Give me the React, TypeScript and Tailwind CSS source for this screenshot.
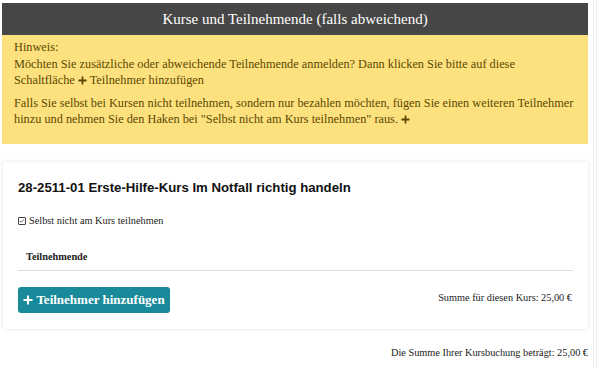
import React from "react";

const serif = { fontFamily: '"Liberation Serif", "DejaVu Serif", serif' };

function Plus({ className = "" }: { className?: string }) {
  return (
    <svg viewBox="0 0 10 10" className={className} aria-hidden>
      <path d="M5 0.5v9M0.5 5h9" stroke="currentColor" strokeWidth="2" fill="none" />
    </svg>
  );
}

export default function App() {
  return (
    <div className="w-[600px] h-[368px] bg-white overflow-hidden relative" style={serif}>
      <div className="absolute top-0 bottom-0 left-[593px] w-[4px] border-l border-r border-[#eeeeee]" />
      <div className="pt-[3px] pl-[2px] w-[588px]">
        <div className="bg-[#464646] h-[32px] flex items-center justify-center text-white text-[15px]">
          Kurse und Teilnehmende (falls abweichend)
        </div>
        <div className="bg-[#fee17f] h-[109px] px-[12px] pt-[4px] text-[#5a4800] text-[12.3px] leading-[16.5px] whitespace-nowrap">
          <div>Hinweis:</div>
          <div>
            Möchten Sie zusätzliche oder abweichende Teilnehmende anmelden? Dann klicken Sie bitte auf diese
            <br />
            Schaltfläche <Plus className="inline w-[9px] h-[9px] mb-[2px]" /> Teilnehmer hinzufügen
          </div>
          <div className="mt-[6px]">
            Falls Sie selbst bei Kursen nicht teilnehmen, sondern nur bezahlen möchten, fügen Sie einen weiteren Teilnehmer
            <br />
            hinzu und nehmen Sie den Haken bei "Selbst nicht am Kurs teilnehmen" raus.{" "}
            <Plus className="inline w-[9px] h-[9px] mb-[2px]" />
          </div>
        </div>
        <div className="mt-[18px] ml-[1px] bg-white h-[167px] shadow-[0_0_4px_rgba(0,0,0,0.12)] px-[15px] pt-[16px]">
          <div
            className="text-[13.2px] font-bold text-[#111]"
            style={{ fontFamily: '"Liberation Sans", Arial, sans-serif' }}
          >
            28-2511-01 Erste-Hilfe-Kurs Im Notfall richtig handeln
          </div>
          <div className="mt-[15px] flex items-center text-[10.3px] text-[#222]">
            <span className="inline-block w-[8px] h-[8px] border border-[#444] rounded-[1px] mr-[3px] relative">
              <svg viewBox="0 0 8 8" className="absolute inset-0 w-full h-full">
                <path d="M1.3 3.8l1.7 1.8L6.6 1.9" stroke="#333" strokeWidth="1.1" fill="none" />
              </svg>
            </span>
            Selbst nicht am Kurs teilnehmen
          </div>
          <div className="mt-[21px] border-b border-[#dcdcdc] pb-[5px] pl-[8px] text-[10.3px] font-bold text-[#222]">
            Teilnehmende
          </div>
          <div className="mt-[16px] flex items-center justify-between">
            <button className="bg-[#198a99] text-white rounded-[3px] h-[26px] w-[152px] flex items-center justify-center gap-[3px] text-[13px] font-bold">
              <Plus className="w-[10px] h-[10px]" />
              Teilnehmer hinzufügen
            </button>
            <div className="text-[10.3px] text-[#222] mr-[1px] mb-[4px]">Summe für diesen Kurs: 25,00 €</div>
          </div>
        </div>
        <div className="mt-[16px] text-right text-[10.3px] text-[#222]">
          Die Summe Ihrer Kursbuchung beträgt: 25,00 €
        </div>
      </div>
    </div>
  );
}
